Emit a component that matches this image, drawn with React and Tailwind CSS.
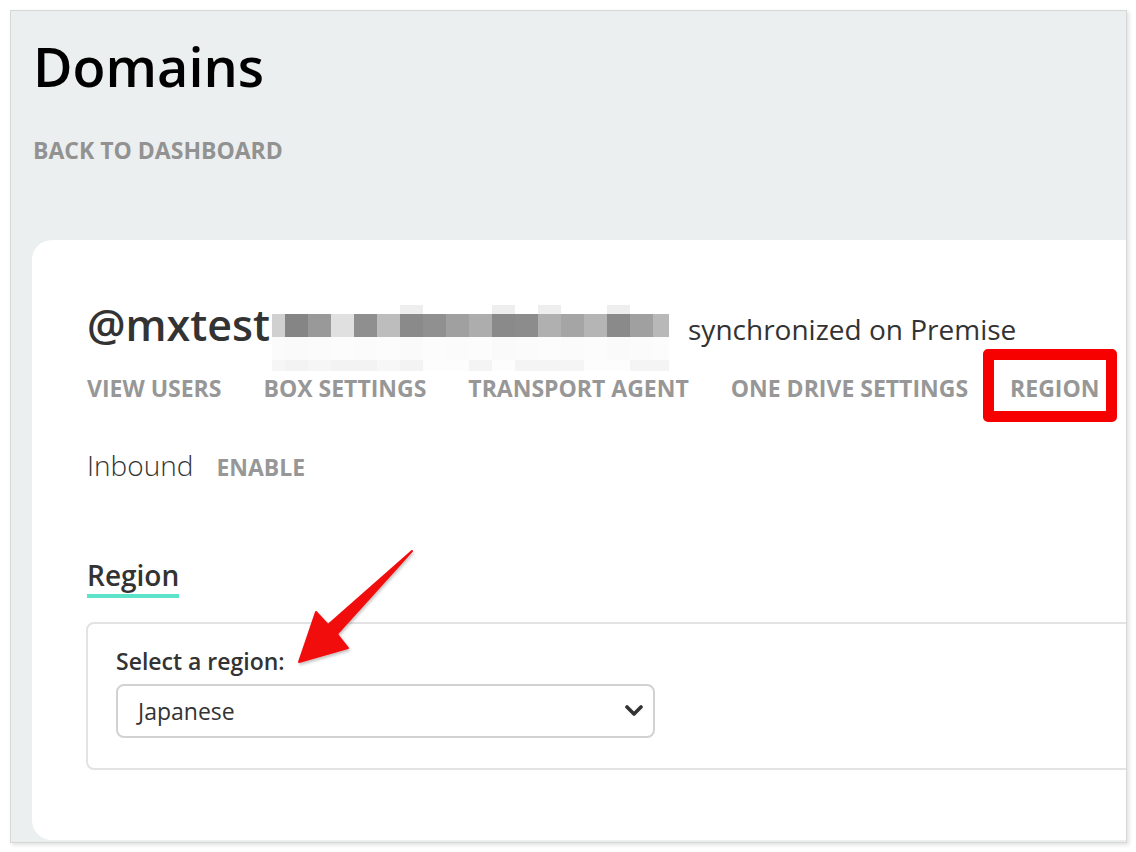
import React from 'react';

// redacted domain name: one row of grey blocks, with faint rows above and below
const mosaic = [
    { w: 'w-[13px]', top: 'bg-[#ffffff]', mid: 'bg-[#d0d0d0]', low: 'bg-[#fbfbfb]', end: 'bg-[#f6f6f6]' },
    { w: 'w-[23px]', top: 'bg-[#ffffff]', mid: 'bg-[#858585]', low: 'bg-[#fafafa]', end: 'bg-[#f3f3f3]' },
    { w: 'w-[23px]', top: 'bg-[#ffffff]', mid: 'bg-[#999999]', low: 'bg-[#fbfbfb]', end: 'bg-[#f6f6f6]' },
    { w: 'w-[23px]', top: 'bg-[#ffffff]', mid: 'bg-[#e0e0e0]', low: 'bg-[#fcfcfc]', end: 'bg-[#f3f3f3]' },
    { w: 'w-[23px]', top: 'bg-[#ffffff]', mid: 'bg-[#8f8f8f]', low: 'bg-[#fbfbfb]', end: 'bg-[#f3f3f3]' },
    { w: 'w-[23px]', top: 'bg-[#ffffff]', mid: 'bg-[#bdbdbd]', low: 'bg-[#fcfcfc]', end: 'bg-[#f7f7f7]' },
    { w: 'w-[23px]', top: 'bg-[#eeeeee]', mid: 'bg-[#8a8a8a]', low: 'bg-[#fafafa]', end: 'bg-[#f3f3f3]' },
    { w: 'w-[23px]', top: 'bg-[#ffffff]', mid: 'bg-[#909090]', low: 'bg-[#fcfcfc]', end: 'bg-[#fdfdfd]' },
    { w: 'w-[23px]', top: 'bg-[#ffffff]', mid: 'bg-[#a0a0a0]', low: 'bg-[#fbfbfb]', end: 'bg-[#fdfdfd]' },
    { w: 'w-[23px]', top: 'bg-[#ffffff]', mid: 'bg-[#adadad]', low: 'bg-[#fcfcfc]', end: 'bg-[#f4f4f4]' },
    { w: 'w-[23px]', top: 'bg-[#eeeeee]', mid: 'bg-[#8a8a8a]', low: 'bg-[#fafafa]', end: 'bg-[#fdfdfd]' },
    { w: 'w-[23px]', top: 'bg-[#ffffff]', mid: 'bg-[#8c8c8c]', low: 'bg-[#fbfbfb]', end: 'bg-[#f4f4f4]' },
    { w: 'w-[23px]', top: 'bg-[#eeeeee]', mid: 'bg-[#b0b0b0]', low: 'bg-[#fcfcfc]', end: 'bg-[#f4f4f4]' },
    { w: 'w-[23px]', top: 'bg-[#ffffff]', mid: 'bg-[#a5a5a5]', low: 'bg-[#fbfbfb]', end: 'bg-[#f5f5f5]' },
    { w: 'w-[23px]', top: 'bg-[#ffffff]', mid: 'bg-[#b5b5b5]', low: 'bg-[#fcfcfc]', end: 'bg-[#fdfdfd]' },
    { w: 'w-[23px]', top: 'bg-[#eeeeee]', mid: 'bg-[#8a8a8a]', low: 'bg-[#fafafa]', end: 'bg-[#fdfdfd]' },
    { w: 'w-[23px]', top: 'bg-[#ffffff]', mid: 'bg-[#a0a0a0]', low: 'bg-[#fbfbfb]', end: 'bg-[#f4f4f4]' },
    { w: 'w-[16px]', top: 'bg-[#ffffff]', mid: 'bg-[#b8b8b8]', low: 'bg-[#fcfcfc]', end: 'bg-[#f4f4f4]' },
];

const tabs = ['VIEW USERS', 'BOX SETTINGS', 'TRANSPORT AGENT', 'ONE DRIVE SETTINGS', 'REGION'];

const App = () => {
    return (
        <div className="relative w-[1136px] h-[852px] bg-white pl-[10px] pt-[10px] overflow-hidden font-['Open_Sans',sans-serif]">
            {/* screenshot frame */}
            <div className="w-[1117px] h-[833px] border border-[#d6d8d8] shadow-[2px_2px_4px_rgba(0,0,0,0.12)] bg-[#ecefef] overflow-hidden">
                <div className="pl-[22px] pt-[23px]">
                    <h1 className="text-[54px] leading-[64px] font-semibold text-black">Domains</h1>
                    <div className="mt-[37px] text-[23px] leading-[30px] font-bold text-[#929292]">BACK TO DASHBOARD</div>
                </div>

                {/* white card, runs off the right edge */}
                <div className="ml-[21px] mt-[75px] w-[1200px] h-[600px] bg-white rounded-l-[20px] pl-[55px] pt-[59px]">
                    <div className="flex items-start h-[52px]">
                        <span className="text-[43px] leading-[52px] font-semibold text-[#333]">@mxtest</span>
                        <div className="mt-[6px] ml-[2px] flex flex-col">
                            <div className="flex">
                                {mosaic.map((c, i) => <div key={i} className={`${c.w} h-[9px] ${c.top}`} />)}
                            </div>
                            <div className="flex">
                                {mosaic.map((c, i) => <div key={i} className={`${c.w} h-[23px] ${c.mid}`} />)}
                            </div>
                            <div className="flex">
                                {mosaic.map((c, i) => <div key={i} className={`${c.w} h-[23px] ${c.low}`} />)}
                            </div>
                            <div className="flex">
                                {mosaic.map((c, i) => <div key={i} className={`${c.w} h-[11px] ${c.end}`} />)}
                            </div>
                        </div>
                        <span className="ml-[19px] mt-[12px] text-[28px] leading-[36px] text-[#333]">synchronized on Premise</span>
                    </div>

                    <div className="mt-[22px] flex gap-[42px] text-[23px] leading-[30px] font-bold text-[#979797]">
                        {tabs.map((t) => <span key={t}>{t}</span>)}
                    </div>

                    <div className="mt-[44px] flex items-baseline gap-[23px]">
                        <span className="text-[28px] leading-[36px] font-light text-[#333]">Inbound</span>
                        <span className="text-[23px] leading-[30px] font-bold text-[#979797]">ENABLE</span>
                    </div>

                    <div className="mt-[74px] inline-block border-b-4 border-[#5ee3cb] pb-[1px]">
                        <h2 className="text-[28px] leading-[36px] font-semibold text-[#333]">Region</h2>
                    </div>

                    <div className="mt-[24px] -ml-[1px] w-[1100px] border-2 border-[#e3e3e3] rounded-[8px] pl-[28px] pt-[22px] pb-[30px]">
                        <div className="text-[23px] leading-[30px] font-semibold text-[#333]">Select a region:</div>
                        <div className="mt-[8px] w-[539px] h-[54px] border-2 border-[#d2d2d2] rounded-[8px] flex items-center justify-between pl-[20px] pr-[10px]">
                            <span className="text-[23px] text-[#333]">Japanese</span>
                            <svg width="18" height="12" viewBox="0 0 18 12">
                                <path d="M2 2 L9 9 L16 2" fill="none" stroke="#333" strokeWidth="3.6" strokeLinecap="round" strokeLinejoin="round" />
                            </svg>
                        </div>
                    </div>
                </div>
            </div>

            {/* annotation: red box around REGION */}
            <div className="absolute left-[983px] top-[349px] w-[134px] h-[73px] border-[11px] border-[#f70000] rounded-[5px]" />

            {/* annotation: red arrow */}
            <svg className="absolute left-0 top-0 pointer-events-none" width="1136" height="852" viewBox="0 0 1136 852">
                <defs>
                    <filter id="ds" x="-20%" y="-20%" width="140%" height="140%">
                        <feDropShadow dx="1" dy="2" stdDeviation="1.5" floodColor="#000" floodOpacity="0.25" />
                    </filter>
                </defs>
                <path d="M412 551 L337 634 L348 648 L299 662 L316 612 L328 625 Z" fill="#f20a0a" strokeLinejoin="round" stroke="#f20a0a" strokeWidth="2" filter="url(#ds)" />
            </svg>
        </div>
    );
};

export default App;
